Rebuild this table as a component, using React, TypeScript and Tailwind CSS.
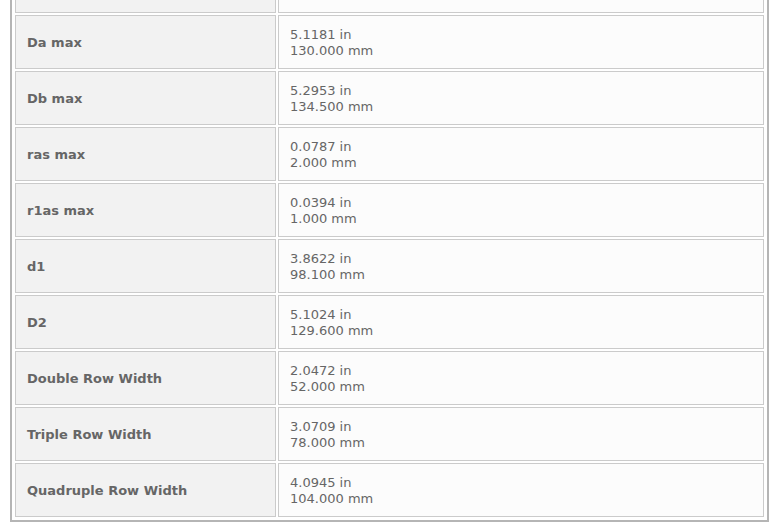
const rows = [
  { label: "", inch: "", mm: "" },
  { label: "Da max", inch: "5.1181 in", mm: "130.000 mm" },
  { label: "Db max", inch: "5.2953 in", mm: "134.500 mm" },
  { label: "ras max", inch: "0.0787 in", mm: "2.000 mm" },
  { label: "r1as max", inch: "0.0394 in", mm: "1.000 mm" },
  { label: "d1", inch: "3.8622 in", mm: "98.100 mm" },
  { label: "D2", inch: "5.1024 in", mm: "129.600 mm" },
  { label: "Double Row Width", inch: "2.0472 in", mm: "52.000 mm" },
  { label: "Triple Row Width", inch: "3.0709 in", mm: "78.000 mm" },
  { label: "Quadruple Row Width", inch: "4.0945 in", mm: "104.000 mm" },
];

export default function App() {
  return (
    <div className="w-[774px] h-[522px] overflow-hidden bg-white font-['DejaVu_Sans',Verdana,sans-serif] text-[13px] text-[#666]">
      <div className="ml-[10px] mt-[-46px] w-[759px] border-2 border-[#b5b5b5] p-px">
        <table className="w-full border-separate border-spacing-[2px] table-fixed">
          <colgroup>
            <col className="w-[261px]" />
            <col />
          </colgroup>
          <tbody>
            {rows.map((r, i) => (
              <tr key={i} className="h-[54px]">
                <td className="border border-[#cbcbcb] bg-[#f2f2f2] pl-[11px] pr-[10px] pt-[2px] align-middle font-bold">
                  {r.label}
                </td>
                <td className="border border-[#cbcbcb] bg-[#fcfcfc] pl-[11px] pr-[10px] pt-[2px] align-middle leading-4">
                  {r.inch && (
                    <>
                      {r.inch}
                      <br />
                      {r.mm}
                    </>
                  )}
                </td>
              </tr>
            ))}
          </tbody>
        </table>
      </div>
    </div>
  );
}
